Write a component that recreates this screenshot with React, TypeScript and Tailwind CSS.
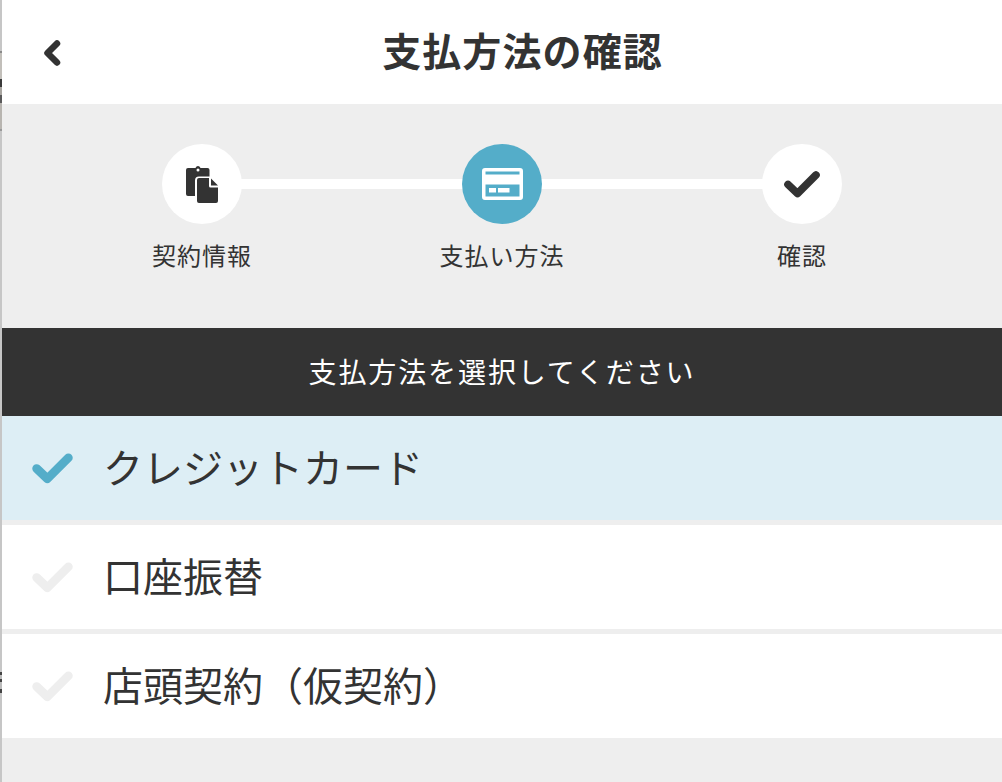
const jp = "font-['Lato','Noto_Sans_CJK_JP',sans-serif]";

// screenshot edge: slim strip of whatever sat behind the page
const edge = [
  { h: 51, c: "#c6c6c6" },
  { h: 2, c: "#8a8a8a" },
  { h: 26, c: "#c2bfba" },
  { h: 8, c: "#3a3a3a" },
  { h: 8, c: "#a8a5a0" },
  { h: 8, c: "#5a5a5a" },
  { h: 26, c: "#b8b5b0" },
  { h: 2, c: "#999999" },
  { h: 541, c: "#c6c6c6" },
  { h: 3, c: "#444444" },
  { h: 4, c: "#bbbbbb" },
  { h: 3, c: "#444444" },
  { h: 7, c: "#bbbbbb" },
  { h: 4, c: "#444444" },
  { h: 89, c: "#c6c6c6" },
];

function Check({ className }: { className: string }) {
  return (
    <svg viewBox="0 0 40 30" className={className} fill="none" stroke="currentColor" strokeWidth="8.5" strokeLinecap="round" strokeLinejoin="round">
      <path d="M4.500 15 L15 25 L35.500 4.500" />
    </svg>
  );
}

function Step({ label, active, children }: { label: string; active?: boolean; children: React.ReactNode }) {
  return (
    <div className="relative flex w-[300px] flex-col items-center">
      <div className={active ? "flex h-20 w-20 items-center justify-center rounded-full bg-[#54adc9]" : "flex h-20 w-20 items-center justify-center rounded-full bg-white"}>
        {children}
      </div>
      <div className="mt-[18px] text-[24px] leading-[28px] tracking-[1px] text-[#333]">{label}</div>
    </div>
  );
}

function Row({ label, selected }: { label: string; selected?: boolean }) {
  return (
    <div className={selected ? "flex h-[104px] items-center bg-[#ddeef5]" : "flex h-[104px] items-center bg-white"}>
      <Check className={selected ? "ml-[30px] h-[31px] w-[41px] text-[#54adc9]" : "ml-[30px] h-[31px] w-[41px] text-[#eeeeee]"} />
      <span className="ml-[30px] text-[40px] leading-[48px] text-[#333]">{label}</span>
    </div>
  );
}

export default function App() {
  return (
    <div className={`${jp} flex h-[782px] w-[1002px] overflow-hidden bg-[#eeeeee]`}>
      <div className="flex h-full w-[2px] shrink-0 flex-col">
        {edge.map((s, i) => (
          <div key={i} style={{ height: s.h, background: s.c }} />
        ))}
      </div>
      <div className="flex min-w-0 flex-1 flex-col">
        <header className="relative flex h-[104px] items-center justify-center bg-white">
          <svg viewBox="0 0 18 26" className="absolute left-[41px] top-[40px] h-[26px] w-[18px] text-[#333]" fill="none" stroke="currentColor" strokeWidth="6.5" strokeLinecap="round" strokeLinejoin="round">
            <path d="M14 3.500 L4.500 13 L14 22.500" />
          </svg>
          <h1 className="ml-[41px] -translate-y-[1px] text-[39px] font-bold leading-[44px] tracking-[1.100px] text-[#333]">支払方法の確認</h1>
        </header>

        <div className="relative flex h-[224px] justify-center pt-10">
          <div className="absolute left-[200px] top-[75px] h-[10px] w-[600px] bg-white" />
          <Step label="契約情報">
            <svg viewBox="0 0 32 37" className="h-[37px] w-[32px]" fill="#333">
              <path fillRule="evenodd" d="M2 2h7.500C10 .7 11 0 12 0s2 .7 2.500 2H21.500a2 2 0 0 1 2 2v6.500H13a4 4 0 0 0-4 4V30H2a2 2 0 0 1-2-2V4a2 2 0 0 1 2-2zM12 2.500a1.500 1.500 0 1 0 0 3 1.500 1.500 0 0 0 0-3z" />
              <path d="M13 12h10v8a1.500 1.500 0 0 0 1.500 1.500H32V35a2 2 0 0 1-2 2H13a2 2 0 0 1-2-2V14a2 2 0 0 1 2-2z" />
              <path d="M25 12.500 L32 19.500 H25z" />
            </svg>
          </Step>
          <Step label="支払い方法" active>
            <svg viewBox="0 0 41 32" className="h-[32px] w-[41px]" fill="none">
              <path fillRule="evenodd" d="M3 0h35a3 3 0 0 1 3 3v26a3 3 0 0 1-3 3H3a3 3 0 0 1-3-3V3a3 3 0 0 1 3-3zM3.500 3.500v3h34v-3zM3.500 16.500v12h34v-12z" fill="#fff" />
              <rect x="7" y="20" width="7" height="4.500" fill="#fff" />
              <rect x="16" y="20" width="11.500" height="4.500" fill="#fff" />
            </svg>
          </Step>
          <Step label="確認">
            <Check className="h-[27px] w-[36px] text-[#333]" />
          </Step>
        </div>

        <div className="flex h-[88px] items-center justify-center bg-[#333] pb-[1px] text-[28px] tracking-[1.900px] text-white">支払方法を選択してください</div>

        <div className="flex flex-col gap-[5px]">
          <Row label="クレジットカード" selected />
          <Row label="口座振替" />
          <Row label="店頭契約（仮契約）" />
        </div>
      </div>
    </div>
  );
}
